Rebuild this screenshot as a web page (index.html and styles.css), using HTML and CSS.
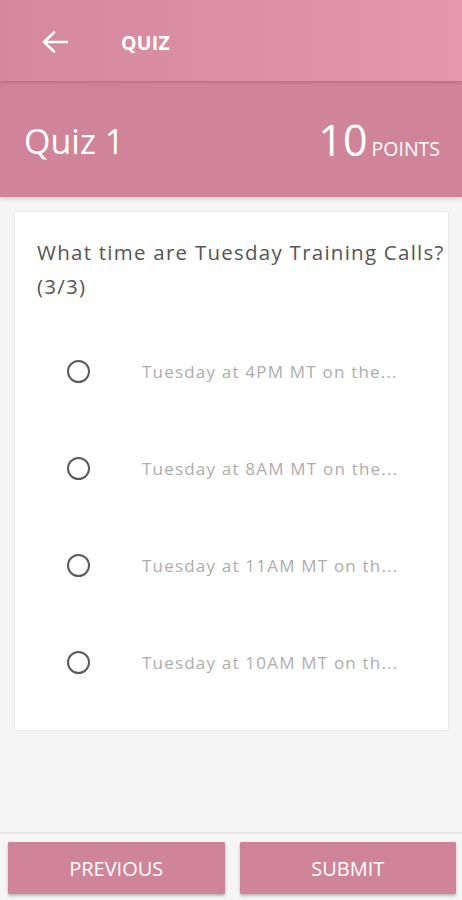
FILE: index.html
```html
<!DOCTYPE html>
<html>
<head>
<meta charset="utf-8">
<link rel="stylesheet" href="styles.css">
</head>
<body>
<div class="app">
  <header class="topbar">
    <svg class="back" width="26" height="22" viewBox="0 0 26 22"><path d="M2 11H25M12 1.5L2 11l10 9.5" fill="none" stroke="#fff" stroke-width="2.6" stroke-linecap="round" stroke-linejoin="round"/></svg>
    <span class="title">QUIZ</span>
  </header>
  <section class="quizhead">
    <span class="quizname">Quiz 1</span>
    <span class="points"><span class="num">10</span><span class="lbl">POINTS</span></span>
  </section>
  <main class="content">
    <div class="card">
      <p class="question">What time are Tuesday Training Calls? (3/3)</p>
      <ul class="options">
        <li class="option"><span class="radio"></span><span class="otext">Tuesday at 4PM MT on the...</span></li>
        <li class="option"><span class="radio"></span><span class="otext">Tuesday at 8AM MT on the...</span></li>
        <li class="option"><span class="radio"></span><span class="otext">Tuesday at 11AM MT on th...</span></li>
        <li class="option"><span class="radio"></span><span class="otext">Tuesday at 10AM MT on th...</span></li>
      </ul>
    </div>
  </main>
  <footer class="footer">
    <button class="btn">PREVIOUS</button>
    <button class="btn">SUBMIT</button>
  </footer>
</div>
</body>
</html>
```
FILE: styles.css
```css
* { box-sizing: border-box; }
html, body { margin: 0; padding: 0; }
body {
  font-family: "Open Sans", "Noto Sans", sans-serif;
  background: #f5f5f5;
  width: 462px;
  height: 900px;
  overflow: hidden;
}
.app {
  display: flex;
  flex-direction: column;
  height: 900px;
}
.topbar {
  height: 81px;
  display: flex;
  align-items: center;
  padding-top: 3px;
  background: linear-gradient(90deg, #d3889c 0%, #e297aa 100%);
  position: relative;
  z-index: 2;
  box-shadow: 0 1px 3px rgba(120, 50, 70, 0.35);
}
.back {
  margin-left: 42px;
  width: 26px;
  height: 22px;
}
.title {
  margin-left: 53px;
  color: #fff;
  font-weight: 700;
  font-size: 19.5px;
  letter-spacing: 0.3px;
}
.quizhead {
  height: 116px;
  background: #d0849a;
  display: flex;
  align-items: center;
  justify-content: space-between;
  padding: 0 22px 0 24px;
  color: #fff;
  position: relative;
  z-index: 1;
  box-shadow: 0 2px 4px rgba(0, 0, 0, 0.15);
}
.quizname {
  font-size: 34px;
  font-weight: 400;
  margin-top: 4px;
}
.points {
  display: flex;
  align-items: baseline;
}
.num {
  font-size: 43px;
}
.lbl {
  font-size: 19.5px;
  margin-left: 4px;
}
.content {
  flex: 1;
  padding: 15px 14px 0 15px;
}
.card {
  background: #fff;
  border-radius: 2px;
  box-shadow: 0 0 2px rgba(0, 0, 0, 0.15);
  height: 518px;
  padding: 23px 0 0 22px;
}
.question {
  margin: 0;
  font-size: 20.5px;
  line-height: 34px;
  color: #555;
  letter-spacing: 1.25px;
}
.options {
  list-style: none;
  margin: 34px 0 0 0;
  padding: 0;
}
.option {
  height: 97px;
  display: flex;
  align-items: center;
}
.option:first-child { margin-top: -14px; }
.radio {
  width: 23px;
  height: 23px;
  border: 2px solid #5a5a5a;
  border-radius: 50%;
  margin-left: 30px;
  flex: none;
}
.otext {
  margin-left: 52px;
  font-size: 17px;
  color: #adadad;
  letter-spacing: 1.2px;
}
.footer {
  height: 68px;
  border-top: 2px solid #e6e6e6;
  display: flex;
  gap: 15px;
  padding: 8px 6px 0 8px;
}
.btn {
  flex: 1;
  height: 52px;
  border: none;
  border-radius: 1px;
  background: #d0849a;
  color: #fff;
  font-family: "Open Sans", "Noto Sans", sans-serif;
  font-size: 20px;
  box-shadow: 0 2px 3px rgba(0, 0, 0, 0.25);
  padding: 0;
}
```
